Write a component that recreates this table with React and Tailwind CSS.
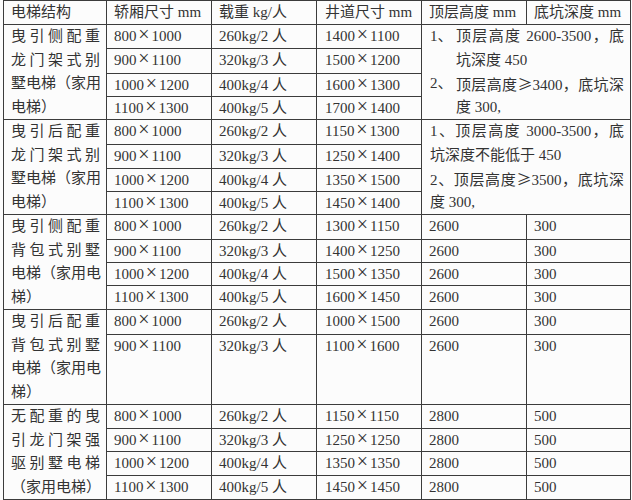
import React from 'react';

const X = () => (
  <span className="inline-block w-[15px] text-center text-[20px] leading-[0] font-light">×</span>
);
const Ge = () => <span className="font-['Noto_Sans_CJK_SC',sans-serif]">≥</span>;

const Size = ({ v }) => {
  const [a, b] = v.split('x');
  return (
    <span>
      {a}
      <X />
      {b}
    </span>
  );
};

const L = ({ children, className = '' }) => (
  <div className={'h-[23.5px] whitespace-nowrap ' + className}>{children}</div>
);

const NameCell = ({ lines, justifyLast }) => (
  <div className="flex flex-col">
    {lines.map((line, i) => {
      const last = i === lines.length - 1;
      if (last && !justifyLast) return <L key={i}>{line}</L>;
      return (
        <div key={i} className="flex justify-between h-[23.5px]">
          {Array.from(line).map((ch, j) => (
            <span key={j}>{ch}</span>
          ))}
        </div>
      );
    })}
  </div>
);

const J = ({ children }) => (
  <div className="h-[23.5px] text-justify [text-align-last:justify]">{children}</div>
);

const NoteA = () => (
  <div className="flex flex-col">
    <div className="flex">
      <span className="w-[26px] shrink-0 h-[23.5px]">1、</span>
      <div className="flex-1">
        <J>顶层高度 2600-3500，底</J>
        <L>坑深度 450</L>
      </div>
    </div>
    <div className="flex">
      <span className="w-[26px] shrink-0 h-[23.5px]">2、</span>
      <div className="flex-1">
        <J>
          顶层高度<Ge />3400，底坑深
        </J>
        <L>度 300,</L>
      </div>
    </div>
  </div>
);

const NoteB = () => (
  <div className="flex flex-col">
    <J>1、顶层高度 3000-3500，底</J>
    <L>坑深度不能低于 450</L>
    <J>
      2、顶层高度<Ge />3500，底坑深
    </J>
    <L>度 300,</L>
  </div>
);

const cars = ['800x1000', '900x1100', '1000x1200', '1100x1300'];
const loads = ['260kg/2 人', '320kg/3 人', '400kg/4 人', '400kg/5 人'];

const groups = [
  {
    name: ['曳引侧配重', '龙门架式别', '墅电梯（家用', '电梯）'],
    heights: [24, 24, 23, 23],
    shafts: ['1400x1100', '1500x1200', '1600x1300', '1700x1400'],
    note: <NoteA />,
  },
  {
    name: ['曳引后配重', '龙门架式别', '墅电梯（家用', '电梯）'],
    heights: [25, 24, 23, 23],
    shafts: ['1150x1300', '1250x1400', '1350x1500', '1450x1400'],
    note: <NoteB />,
  },
  {
    name: ['曳引侧配重', '背包式别墅', '电梯（家用电', '梯）'],
    heights: [25, 23, 23, 24],
    shafts: ['1300x1150', '1400x1250', '1500x1350', '1600x1450'],
    top: '2600',
    pit: '300',
  },
  {
    name: ['曳引后配重', '背包式别墅', '电梯（家用电', '梯）'],
    heights: [24, 69],
    shafts: ['1000x1500', '1100x1600'],
    top: '2600',
    pit: '300',
  },
  {
    name: ['无配重的曳', '引龙门架强', '驱别墅电梯', '（家用电梯）'],
    heights: [24, 23, 23, 24],
    shafts: ['1150x1150', '1250x1250', '1350x1350', '1450x1450'],
    top: '2800',
    pit: '500',
    justifyLast: true,
  },
];

const td = 'border border-[#3c3c3c] align-top p-0 pl-[7px] pr-[4px] overflow-hidden';

const One = ({ children }) => <div className="h-[21px] whitespace-nowrap">{children}</div>;

export default function App() {
  return (
    <div className="w-[632px] h-[500px] bg-[#fcfcfc] overflow-hidden">
      <table
        className="ml-[3px] table-fixed border-collapse text-[15px] leading-[23.5px] text-[#333] font-['Liberation_Serif','Noto_Sans_CJK_SC',serif]"
        style={{ width: 627 }}
      >
        <colgroup>
          <col className="w-[103px]" />
          <col className="w-[105px]" />
          <col className="w-[105px]" />
          <col className="w-[105px]" />
          <col className="w-[105px]" />
          <col className="w-[104px]" />
        </colgroup>
        <tbody>
          <tr className="h-[24px]">
            <td className={td}><One>电梯结构</One></td>
            <td className={td}><One>轿厢尺寸 mm</One></td>
            <td className={td}><One>载重 kg/人</One></td>
            <td className={td + ' pl-[8px]'}><One>井道尺寸 mm</One></td>
            <td className={td}><One>顶层高度 mm</One></td>
            <td className={td}><One>底坑深度 mm</One></td>
          </tr>
          {groups.map((g, gi) =>
            g.heights.map((h, ri) => (
              <tr key={gi + '-' + ri} style={{ height: h }}>
                {ri === 0 && (
                  <td className={td + ' pr-[6px]'} rowSpan={g.heights.length}>
                    <NameCell lines={g.name} justifyLast={g.justifyLast} />
                  </td>
                )}
                <td className={td}>
                  <One><Size v={cars[ri]} /></One>
                </td>
                <td className={td}><One>{loads[ri]}</One></td>
                <td className={td + ' pl-[8px]'}>
                  <One><Size v={g.shafts[ri]} /></One>
                </td>
                {g.note ? (
                  ri === 0 && (
                    <td className={td + ' pl-[8px] pr-[6px]'} colSpan={2} rowSpan={g.heights.length}>
                      {g.note}
                    </td>
                  )
                ) : (
                  <>
                    <td className={td}><One>{g.top}</One></td>
                    <td className={td}><One>{g.pit}</One></td>
                  </>
                )}
              </tr>
            ))
          )}
        </tbody>
      </table>
    </div>
  );
}
